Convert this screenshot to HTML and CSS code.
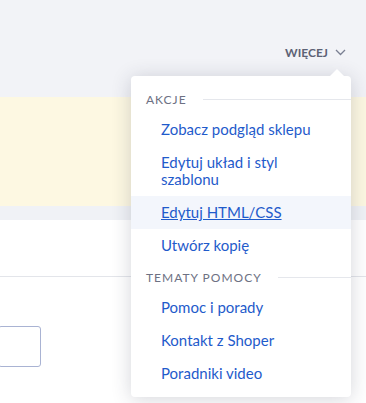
FILE: index.html
```html
<!DOCTYPE html>
<html lang="pl">
<head>
    <meta charset="UTF-8">
    <meta name="viewport" content="width=device-width, initial-scale=1.0">
    <title>Szablon</title>
    <link rel="stylesheet" href="styles.css">
</head>
<body>

    <div class="topbar">
        <div class="more">
            <a href="#" class="more-toggle">WIĘCEJ
                <svg width="11" height="7" viewBox="0 0 11 7"><path d="M1 1l4.5 4.5L10 1" fill="none" stroke="#7a7f92" stroke-width="1.3"/></svg>
            </a>
        </div>
    </div>

    <div class="notice"></div>
    <div class="strip"></div>

    <div class="section"></div>
    <div class="form-row">
        <div class="field"></div>
    </div>

    <div class="dropdown">
        <div class="group-title"><span>AKCJE</span></div>
        <a href="#" class="item">Zobacz podgląd sklepu</a>
        <a href="#" class="item">Edytuj układ i styl szablonu</a>
        <a href="#" class="item active">Edytuj HTML/CSS</a>
        <a href="#" class="item">Utwórz kopię</a>
        <div class="group-title second"><span>TEMATY POMOCY</span></div>
        <a href="#" class="item">Pomoc i porady</a>
        <a href="#" class="item">Kontakt z Shoper</a>
        <a href="#" class="item">Poradniki video</a>
    </div>

</body>
</html>
```

FILE: styles.css
```css
* {
    margin: 0;
    padding: 0;
    box-sizing: border-box;
    font-family: "Lato", "Noto Sans", sans-serif;
}

body {
    background: #ffffff;
    width: 366px;
    height: 403px;
    overflow: hidden;
    position: relative;
}

/* Top bar */
.topbar {
    height: 97px;
    background: #f2f3f7;
    display: flex;
    justify-content: flex-end;
    padding: 44px 20px 0 0;
}

.more-toggle {
    display: flex;
    align-items: center;
    gap: 7px;
    color: #5d6275;
    text-decoration: none;
    font-size: 12px;
    font-weight: 700;
    height: 16px;
}

/* Page content behind menu */
.notice {
    height: 109px;
    background: #fdf8e2;
}

.strip {
    height: 14px;
    background: #f0f2f6;
}

.section {
    height: 57px;
    border-bottom: 1px solid #e3e5ea;
}

.form-row {
    padding-top: 49px;
}

.field {
    width: 43px;
    height: 41px;
    margin-left: -2px;
    border: 1px solid #a9b3d3;
    border-radius: 3px;
}

/* Dropdown menu */
.dropdown {
    position: absolute;
    top: 76px;
    left: 131px;
    width: 220px;
    background: #ffffff;
    border-radius: 4px;
    box-shadow: 0 2px 20px rgba(40, 45, 70, 0.2);
    padding: 13px 0 7px;
}

.dropdown::before {
    content: "";
    position: absolute;
    top: -7px;
    right: 7px;
    border-left: 7px solid transparent;
    border-right: 7px solid transparent;
    border-bottom: 7px solid #ffffff;
}

.group-title {
    display: flex;
    align-items: center;
    gap: 16px;
    padding-left: 15px;
    height: 20px;
    font-size: 12px;
    letter-spacing: 1px;
    color: #6d7183;
}

.group-title.second {
    margin-top: 5px;
}

.group-title::after {
    content: "";
    flex: 1;
    height: 1px;
    background: #e5e7ec;
}

.item {
    display: block;
    padding: 8px 20px 8px 30px;
    font-size: 15px;
    line-height: 17px;
    color: #1f5bcb;
    text-decoration: none;
}

.item.active {
    background: #f3f6fc;
    text-decoration: underline;
}

.group-title + .item {
    margin-top: 4px;
}
```
